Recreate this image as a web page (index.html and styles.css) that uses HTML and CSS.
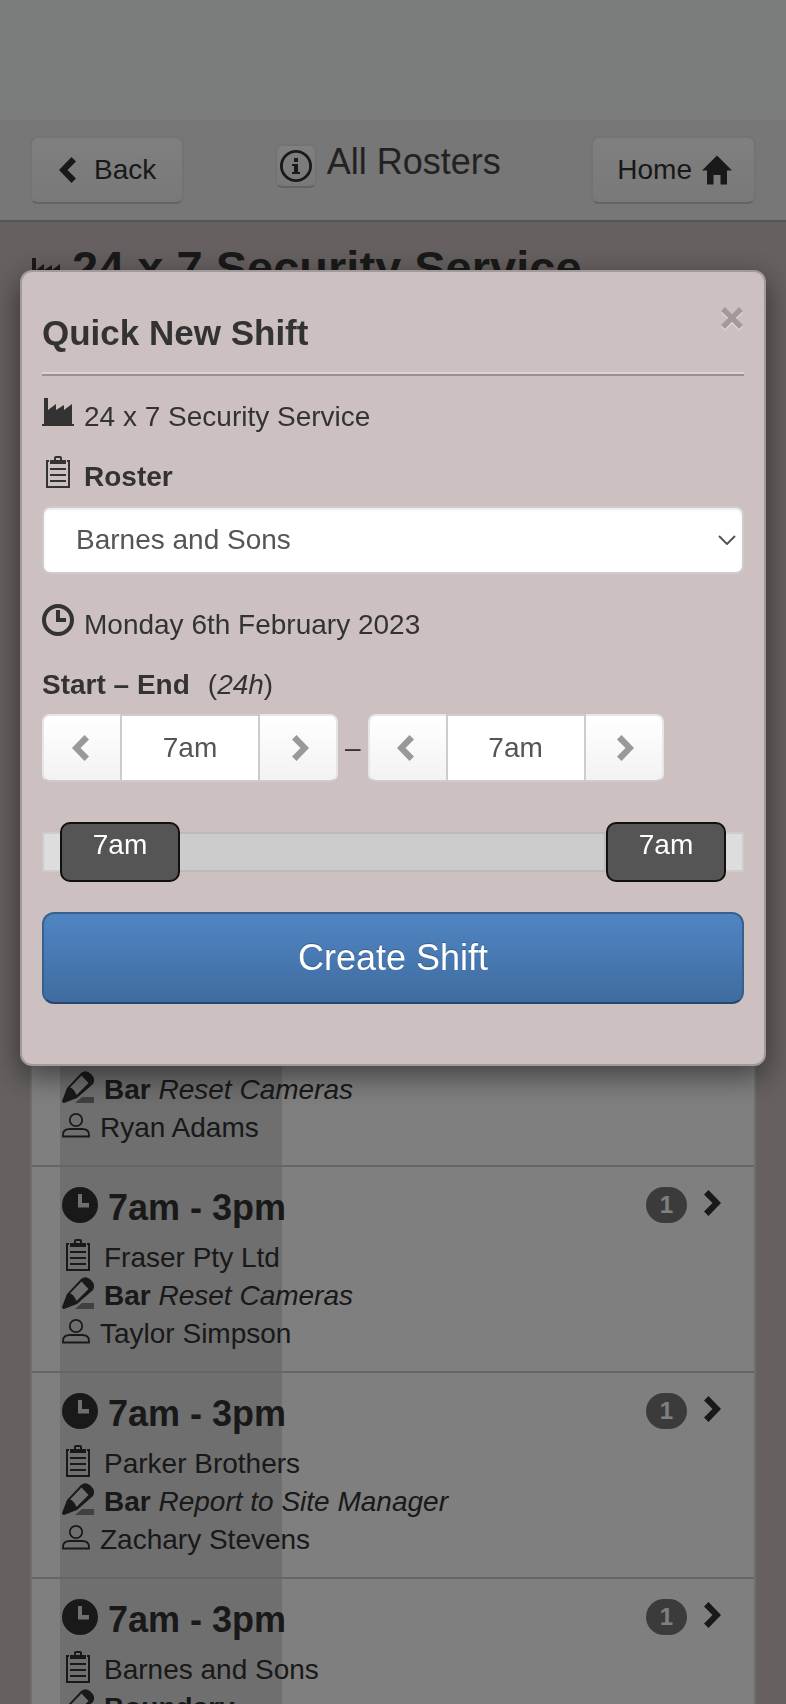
FILE: index.html
```html
<!DOCTYPE html>
<html lang="en">
<head>
<meta charset="utf-8">
<meta name="viewport" content="width=device-width, initial-scale=1">
<title>All Rosters</title>
<link rel="stylesheet" href="styles.css">
</head>
<body>
<svg class="sprite" aria-hidden="true">
  <symbol id="left" viewBox="0 0 17 26"><path d="M0 13 12.5 0 17 4.5 8.5 13 17 21.5 12.5 26z"/></symbol>
  <symbol id="right" viewBox="0 0 17 26"><path d="M17 13 4.500 0 0 4.500 8.500 13 0 21.500 4.500 26z"/></symbol>
  <symbol id="home" viewBox="0 0 30 30"><path d="M15 .5 30 15.500H25V29.500H18.500V20H11.500V29.500H5V15.500H0z"/></symbol>
  <symbol id="info" viewBox="0 0 32 32"><circle cx="16" cy="16" r="14.600" fill="none" stroke="currentColor" stroke-width="2.800"/><path d="M14 8h4v4h-4zM12 14h6v8h2v2h-8v-2h2v-6h-2z"/></symbol>
  <symbol id="factory" viewBox="0 0 32 32"><path d="M2 2h4v12l8-6v6l8-5v5l8-6v20h2v2H0v-2h2z"/></symbol>
  <symbol id="clipboard" viewBox="0 0 32 32"><path d="M12 4V2q0-2 2-2h4q2 0 2 2v2h4v4H8V4zM14 2v2h4V2z" fill-rule="evenodd"/><path d="M7 5H5v26h22V5h-2" fill="none" stroke="currentColor" stroke-width="2"/><path d="M8 12h16v2H8zM8 18h16v2H8zM8 24h16v2H8z"/></symbol>
  <symbol id="clock" viewBox="0 0 32 32"><circle cx="16" cy="16" r="14" fill="none" stroke="currentColor" stroke-width="4"/><path d="M14 6h4v8h6v4H14z"/></symbol>
  <symbol id="clock-solid" viewBox="0 0 36 36"><path fill-rule="evenodd" d="M18 0a18 18 0 1 0 0 36a18 18 0 1 0 0-36zM16 7h4v9h7v4.500H16z"/></symbol>
  <symbol id="pencil" viewBox="0 0 32 32"><path d="M20 26h12v6H13z" opacity=".55"/><path fill-rule="evenodd" d="M0 30 5 17 19 2q5-4 10 1t2 10L15 27 2 32q-2 0-2-2zM19.500 4.500 8 16.500q4 1 6.500 7.500L26.500 12z"/></symbol>
  <symbol id="person" viewBox="0 0 28 26"><g fill="none" stroke="currentColor" stroke-width="1.800"><circle cx="14" cy="8" r="6.200"/><path d="M1 24.500V23q0-6 7-6h12q7 0 7 6v1.500z"/></g></symbol>
  <symbol id="cross" viewBox="0 0 22 22"><path d="M4.500 1 11 7.500 17.500 1 21 4.500 14.500 11 21 17.500 17.500 21 11 14.500 4.500 21 1 17.500 7.500 11 1 4.500z"/></symbol>
</svg>

<div class="status-bar"></div>
<header class="navbar">
  <button class="btn nav-btn back"><svg class="chevron"><use href="#left"/></svg>Back</button>
  <div class="nav-title">
    <button class="btn info-btn" aria-label="Information"><svg class="icon"><use href="#info"/></svg></button>
    <span>All Rosters</span>
  </div>
  <button class="btn nav-btn">Home<svg class="home-icon"><use href="#home"/></svg></button>
</header>

<main class="page">
  <h1 class="company"><svg class="icon"><use href="#factory"/></svg>24 x 7 Security Service</h1>
  <ul class="shifts">
    <li class="shift">
      <div class="shift-body">
        <div class="details">
          <p class="line"><svg class="icon"><use href="#pencil"/></svg><span><b>Bar</b> <i>Reset Cameras</i></span></p>
          <p class="line"><svg class="person-icon"><use href="#person"/></svg>Ryan Adams</p>
        </div>
      </div>
    </li>
    <li class="shift">
      <div class="shift-body">
        <div class="details">
          <h2 class="hours"><svg class="big-icon"><use href="#clock-solid"/></svg>7am - 3pm</h2>
          <p class="line"><svg class="icon"><use href="#clipboard"/></svg>Fraser Pty Ltd</p>
          <p class="line"><svg class="icon"><use href="#pencil"/></svg><span><b>Bar</b> <i>Reset Cameras</i></span></p>
          <p class="line"><svg class="person-icon"><use href="#person"/></svg>Taylor Simpson</p>
        </div>
        <div class="more"><span class="badge">1</span><svg class="chevron"><use href="#right"/></svg></div>
      </div>
    </li>
    <li class="shift">
      <div class="shift-body">
        <div class="details">
          <h2 class="hours"><svg class="big-icon"><use href="#clock-solid"/></svg>7am - 3pm</h2>
          <p class="line"><svg class="icon"><use href="#clipboard"/></svg>Parker Brothers</p>
          <p class="line"><svg class="icon"><use href="#pencil"/></svg><span><b>Bar</b> <i>Report to Site Manager</i></span></p>
          <p class="line"><svg class="person-icon"><use href="#person"/></svg>Zachary Stevens</p>
        </div>
        <div class="more"><span class="badge">1</span><svg class="chevron"><use href="#right"/></svg></div>
      </div>
    </li>
    <li class="shift">
      <div class="shift-body">
        <div class="details">
          <h2 class="hours"><svg class="big-icon"><use href="#clock-solid"/></svg>7am - 3pm</h2>
          <p class="line"><svg class="icon"><use href="#clipboard"/></svg>Barnes and Sons</p>
          <p class="line"><svg class="icon"><use href="#pencil"/></svg><b>Boundary</b></p>
        </div>
        <div class="more"><span class="badge">1</span><svg class="chevron"><use href="#right"/></svg></div>
      </div>
    </li>
  </ul>
</main>

<div class="backdrop">
  <form class="modal" role="dialog" aria-labelledby="modal-title">
    <div class="modal-header">
      <h3 class="modal-title" id="modal-title">Quick New Shift</h3>
      <button type="button" class="close" aria-label="Close"><svg class="close-icon"><use href="#cross"/></svg></button>
    </div>
    <p class="field-line"><svg class="icon"><use href="#factory"/></svg>24 x 7 Security Service</p>
    <label class="field-line roster-label" for="roster"><svg class="icon"><use href="#clipboard"/></svg><b>Roster</b></label>
    <div class="select-wrap">
      <select id="roster"><option>Barnes and Sons</option></select>
      <svg class="caret" viewBox="0 0 18 10"><path d="M1 1l8 8 8-8" fill="none" stroke="currentColor" stroke-width="2"/></svg>
    </div>
    <p class="field-line"><svg class="icon"><use href="#clock"/></svg>Monday 6th February 2023</p>
    <p class="field-line times-label"><b>Start – End</b><span>(<i>24h</i>)</span></p>
    <div class="times">
      <div class="stepper">
        <button type="button" class="step prev" aria-label="Earlier start"><svg class="chevron"><use href="#left"/></svg></button>
        <input type="text" value="7am" aria-label="Start">
        <button type="button" class="step next" aria-label="Later start"><svg class="chevron"><use href="#right"/></svg></button>
      </div>
      <span>–</span>
      <div class="stepper">
        <button type="button" class="step prev" aria-label="Earlier end"><svg class="chevron"><use href="#left"/></svg></button>
        <input type="text" value="7am" aria-label="End">
        <button type="button" class="step next" aria-label="Later end"><svg class="chevron"><use href="#right"/></svg></button>
      </div>
    </div>
    <div class="slider">
      <div class="track"><div class="track-range"></div></div>
      <input type="range" id="from" min="0" max="24" value="0" aria-label="Start time">
      <input type="range" id="to" min="0" max="24" value="24" aria-label="End time">
      <div class="handle-labels"><output for="from">7am</output><output for="to">7am</output></div>
    </div>
    <button type="button" class="create">Create Shift</button>
  </form>
</div>
</body>
</html>
```
FILE: styles.css
```css
* { box-sizing: border-box; }

html, body { height: 100%; }

body {
  margin: 0;
  overflow: hidden;
  background: #ccc0c0;
  color: #333;
  font: 28px/42px "Liberation Sans", Arial, sans-serif;
}

h1, h2, h3, p, ul { margin: 0; padding: 0; }

button, input, select { font: inherit; color: inherit; margin: 0; }

svg { flex: none; fill: currentColor; }

.sprite { position: absolute; width: 0; height: 0; }
.icon { width: 32px; height: 32px; }
.big-icon { width: 36px; height: 36px; }
.home-icon { width: 30px; height: 30px; }
.person-icon { width: 28px; height: 26px; margin-top: 3px; }
.chevron { width: 17px; height: 26px; }

/* Header */
.status-bar { height: 120px; background: #f6fbf8; }

.navbar {
  display: flex;
  justify-content: space-between;
  align-items: flex-start;
  padding: 16px 30px;
  background: #eee;
  border-bottom: 2px solid #aaa;
}

.btn {
  display: flex;
  align-items: center;
  border: 2px solid #e6e6e6;
  border-bottom-color: #c8c8c8;
  border-radius: 8px;
  background: linear-gradient(#fff, #f2f2f2);
}

.nav-btn { height: 68px; gap: 10px; padding: 0 22px 0 24px; }
.back { gap: 18px; padding: 0 26px 0 27px; }
.info-btn { width: 42px; height: 44px; padding: 0; justify-content: center; }

.nav-title {
  display: flex;
  gap: 10px;
  padding-top: 8px;
  font-size: 36px;
  line-height: 36px;
  color: #444;
}
.nav-title .btn { color: #333; }

/* Shift list */
.page { padding: 20px 30px; }

.company {
  display: flex;
  align-items: center;
  gap: 10px;
  font-size: 47px;
  line-height: 52px;
  padding-bottom: 756px;
}
.company .icon { margin-top: 8px; }

.shifts {
  list-style: none;
  background: #fff;
  border: solid #ddd;
  border-width: 0 2px;
}

.shift { padding: 0 28px; border-bottom: 2px solid #ccc; }

.shift-body {
  display: flex;
  justify-content: space-between;
  align-items: flex-start;
  padding: 20px 5px 18px 2px;
  background: linear-gradient(#dedede, #dedede) 0 0 / 33.333% 100% no-repeat;
}
.shift:first-child .shift-body { padding-top: 21px; }

.hours {
  display: flex;
  gap: 10px;
  margin-bottom: 10px;
  font-size: 36px;
  line-height: 42px;
}

.line { display: flex; gap: 10px; line-height: 38px; }

.more { display: flex; gap: 17px; }
.more .chevron { margin-top: 3px; }

.badge {
  width: 41px;
  border-radius: 18px;
  background: #777;
  color: #fff;
  font-size: 24px;
  font-weight: bold;
  line-height: 36px;
  text-align: center;
}

/* Dialog */
.backdrop {
  position: fixed;
  inset: 0;
  padding: 270px 20px 0;
  background: rgba(0, 0, 0, .5);
}

.modal {
  padding: 34px 20px 60px;
  border: 2px solid #a39999;
  border-radius: 12px;
  background: #ccc0c0;
  box-shadow: 0 10px 30px rgba(0, 0, 0, .5);
}

.modal-header {
  display: flex;
  justify-content: space-between;
  align-items: flex-start;
  margin-bottom: 20px;
  padding-bottom: 20px;
  border-bottom: 2px solid #9b9090;
  box-shadow: inset 0 -2px #ddd3d3;
}

.modal-title { padding-top: 6px; font-size: 35px; line-height: 42px; }

.close { display: flex; padding: 0; border: 0; background: none; color: #a39999; }
.close-icon { width: 24px; height: 24px; filter: drop-shadow(0 2px 0 #ded6d6); }

.field-line { display: flex; gap: 10px; margin-bottom: 18px; }
.roster-label, .times-label { margin-bottom: 8px; }
.times-label { gap: 18px; }

.select-wrap { display: grid; align-items: center; margin-bottom: 30px; color: #555; }
.select-wrap > * { grid-area: 1 / 1; }
.select-wrap select {
  appearance: none;
  width: 100%;
  height: 68px;
  padding: 0 32px;
  border: 2px solid #ccc;
  border-radius: 8px;
  background: #fff;
  box-shadow: inset 0 2px 2px rgba(0, 0, 0, .08);
}
.caret { justify-self: end; width: 18px; height: 10px; margin-right: 8px; pointer-events: none; }

.times { display: flex; align-items: center; gap: 7px; margin-bottom: 40px; }

.stepper { display: flex; }
.stepper input {
  width: 140px;
  height: 68px;
  padding: 0;
  border: 2px solid #ccc;
  border-radius: 0;
  background: #fff;
  color: #555;
  text-align: center;
}
.step {
  display: flex;
  align-items: center;
  justify-content: center;
  width: 78px;
  padding: 0;
  border: 2px solid #e6e6e6;
  border-bottom-color: #ccc;
  background: linear-gradient(#fff, #f2f2f2);
  color: #999;
}
.prev { padding-right: 4px; border-right: 0; border-radius: 8px 0 0 8px; }
.next { padding-left: 4px; border-left: 0; border-radius: 0 8px 8px 0; }

.slider { display: grid; margin-bottom: 30px; }
.slider > * { grid-area: 1 / 1; }

.track {
  height: 40px;
  margin: 10px 0;
  border: 2px solid #ccc;
  background: #ddd;
}
.track-range {
  height: 40px;
  margin: -2px 136px -2px 16px;
  border: 2px solid #bbb;
  background: #ccc;
}

.slider input {
  appearance: none;
  height: 60px;
  margin: 0 18px;
  background: none;
  pointer-events: none;
}
.slider input::-webkit-slider-thumb {
  appearance: none;
  width: 120px;
  height: 60px;
  border: 2px solid #111;
  border-radius: 10px;
  background: #555;
  pointer-events: auto;
}

.handle-labels {
  z-index: 1;
  display: flex;
  justify-content: space-between;
  margin: 2px 18px;
  color: #fff;
  pointer-events: none;
}
.handle-labels output { width: 120px; text-align: center; }

.create {
  width: 100%;
  height: 92px;
  border: 2px solid #36618f;
  border-bottom-color: #2a4668;
  border-radius: 12px;
  background: linear-gradient(#5085c2, #3f6ca0);
  color: #fff;
  font-size: 36px;
  text-shadow: 0 -1px 0 rgba(0, 0, 0, .25);
}
```
